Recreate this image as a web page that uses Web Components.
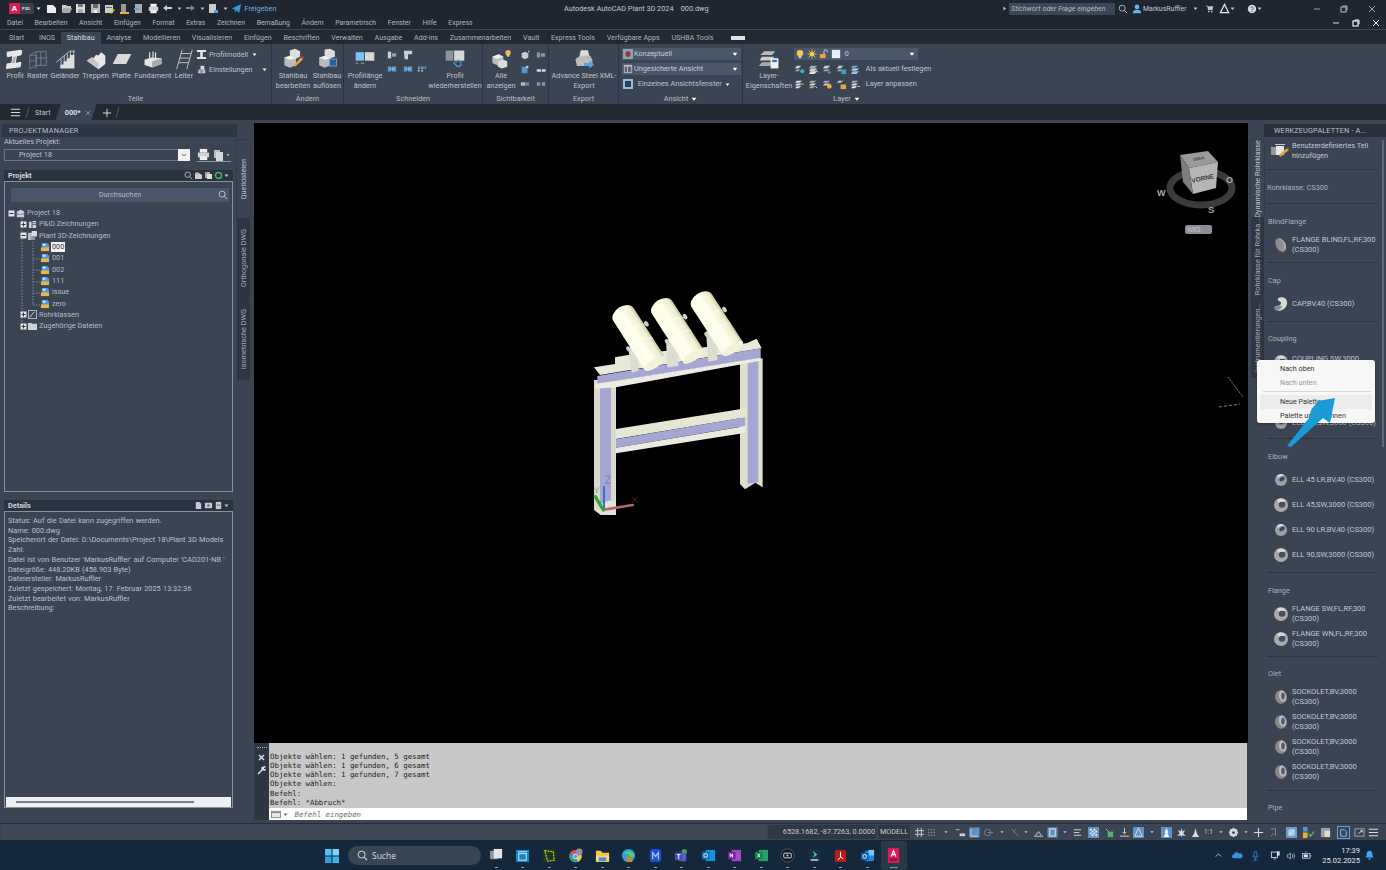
<!DOCTYPE html>
<html lang="de"><head><meta charset="utf-8"><title>AutoCAD Plant 3D</title>
<style>
html,body{margin:0;padding:0;width:1386px;height:870px;overflow:hidden;background:#222933;font:7.3px/10px Roboto,"Open Sans","Liberation Sans",sans-serif;color:#bcc3cc}
</style></head><body>
<script>
const I={
profil:[24,`<path fill="#e8e8e8" d="M3 4l15-2 2 1-1 5-5 1-1 7 5-1 1 1-1 5-15 2-1-1 1-5 5-1 1-7-5 1-1-1z"/><path fill="#aaa" d="M10 10l3-1-1 7-3 1z"/>`],
raster:[24,`<g fill="none" stroke="#858b95" stroke-width=".8"><path d="M3 8l7-4h11v15H10l-7 4zM3 8h7v15M10 4v15M15 4v15M3 14h7M10 11h11"/></g>`],
gelaender:[28,`<path fill="#ddd" d="M4 26h4v-5h4v-4h4v-4h4V9h6v17z"/><g fill="none" stroke="#ddd"><path d="M3 18L20 4h7M9 13v8M13 10v7M17 7v6M21 4v5M25 4v5"/></g>`],
treppen:[26,`<path fill="#e8e8e8" d="M2 15l6-4 2 1 3-4 3 1 3-4 5 4v10l-8 6z"/><path fill="#aaa" d="M2 15l14 9v-6L8 11z" opacity=".55"/>`],
platte:[26,`<path fill="#d9d9d9" d="M8 7h16l-6 12H2z"/>`],
fundament:[26,`<path fill="#e4e4e4" d="M3 14l9-3 11 1v7l-11 4-9-3z"/><path fill="#aaa" d="M12 16l11-4v7l-11 4z"/><path stroke="#e4e4e4" stroke-width="1.4" d="M9 12V5M13 11V4M16 12V5"/>`],
leiter:[24,`<g fill="none" stroke="#c8c8c8" stroke-width="1"><path d="M10 2L4 23M21 2l-6 21M8.500 6h11M7 11h11M6 16h11"/></g>`],
bedit:[28,`<path fill="#ddd" d="M10 3l7-2 6 3v7l-6 3-7-3z"/><path fill="#bbb" d="M3 12l8-2 7 3v9l-8 3-7-3z"/><path fill="#f2f2f2" d="M3 12l8-2 7 3-8 2z"/><path fill="#e9a33b" d="M17 24l-2-2 9-10 3 2z"/><path fill="#d33" d="M24 12l2-2 2 2-2 2z"/>`],
bdel:[28,`<path fill="#ddd" d="M11 2l7-1 6 3v7l-6 2-7-3z"/><path fill="#bbb" d="M4 12l8-2 7 3v9l-8 3-7-3z"/><path fill="#f2f2f2" d="M4 12l8-2 7 3-8 2z"/><rect x="17" y="14" width="9" height="9" fill="#2c5d9c" stroke="#6fb2ea"/>`],
plen:[26,`<rect x="2" y="5" width="10" height="10" fill="#7cc2f2"/><rect x="13" y="5" width="11" height="10" fill="#d8d8d8"/><path stroke="#ddd" stroke-width=".7" d="M2 18h3M8 18h4" />`],
prest:[26,`<rect x="2" y="3" width="9" height="12" fill="#8d949f"/><rect x="12" y="3" width="12" height="12" fill="#d8d8d8"/><path fill="none" stroke="#4fa3e6" stroke-width="1.400" d="M11 17l4 4a3 3 0 0 0 5-3 3 3 0 0 0-6-1"/>`],
alle:[28,`<path fill="#bbb" d="M3 11l8-3 6 3v8l-8 3-6-3z"/><path fill="#eee" d="M3 11l8-3 6 3-8 3z"/><path fill="#ddd" d="M10 17l7-2 5 2v7l-7 2-5-2z"/><circle cx="23" cy="6" r="3.400" fill="#f0b84c"/><rect x="21.500" y="9" width="3" height="2" fill="#ddd"/>`],
xml:[28,`<path fill="#ddd" d="M10 3h9l2 8H8z"/><path fill="#bbb" d="M3 14l6-4h13l3 6-1 7H5z"/><path fill="#4fa3e6" d="M14 19h7v-3l6 5-6 5v-3h-7z"/>`],
lay:[28,`<path fill="#bbb" d="M8 4h14l-4 5H3z"/><path fill="#ccc" d="M5 11h16l-4 5H2z"/><path fill="#aaa" d="M5 18h14l-4 5H1z"/><rect x="16" y="13" width="10" height="13" fill="#f1f1f1"/><rect x="18" y="15" width="6" height="3" fill="#2c75c9"/>`],
ibeam:[12,`<path fill="#e5e5e5" d="M1 1h10v2.400H7.400v5.200H11V11H1V8.600h3.600V3.400H1z"/>`],
gear:[12,`<path fill="#ccc" d="M3 6h7v4H2z"/><path fill="#ddd" d="M5 2h4v4H5z"/><circle cx="6" cy="8" r="2" fill="#999"/>`],
new1:[11,`<path fill="#eee" d="M1 2h6l3 3v5H1z"/>`],
open:[11,`<path fill="#ccc" d="M1 2h4l1 1h4v2H3L1 10z"/><path fill="#aaa" d="M3 5h8l-2 5H1z"/>`],
save:[11,`<path fill="#ddd" d="M1 1h9v9H1z"/><rect x="3" y="1" width="5" height="3" fill="#777"/><rect x="3" y="6" width="5" height="4" fill="#aaa"/>`],
saveas:[11,`<path fill="#bbb" d="M1 1h9v9H1z"/><rect x="3" y="1" width="5" height="4" fill="#666"/><rect x="4" y="7" width="3" height="3" fill="#eee"/>`],
qs3:[11,`<rect x="1" y="2" width="8" height="8" fill="#ccc"/><rect x="2" y="4" width="6" height="1" fill="#666"/><path fill="#e8a93c" d="M6 10l4-4 1 1-4 4z"/>`],
qs4:[11,`<rect x="2" y="1" width="5" height="8" fill="#999"/><path fill="#e8b23c" d="M1 9h9v2H1z"/>`],
qs5:[11,`<rect x="2" y="1" width="7" height="9" fill="#aaa"/><path fill="#4fa3e6" d="M1 5h5v2H1z"/>`],
print:[14,`<rect x="3" y="1" width="8" height="4" fill="#eee"/><rect x="1" y="5" width="12" height="5" fill="#cfd3d8"/><rect x="3" y="9" width="8" height="4" fill="#eee"/>`],
undo:[11,`<path fill="#ccc" d="M1 5l4-3v2h5v2H5v2z"/>`],
redo:[11,`<path fill="#7d8592" d="M10 5L6 2v2H1v2h5v2z"/>`],
share:[12,`<path fill="#2f97e0" d="M1 6l10-5-2 10-3-3-1 3-1-4z"/>`],
dots:[11,`<rect x="1" y="1" width="7" height="9" fill="#ccc"/><path fill="#4fa3e6" d="M6 7h4v3H6z"/>`],
tri:[5,`<path fill="#c4cad2" d="M.5 1.500h4L2.500 4z"/>`],
triw:[5,`<path fill="#fff" d="M.5 1.500h4L2.500 4z"/>`],
triR:[5,`<path fill="#c4cad2" d="M1.500.5v4L4 2.500z"/>`],
mag:[12,`<circle cx="5" cy="5" r="3.600" fill="none" stroke="#c5cbd3" stroke-width="1"/><path stroke="#c5cbd3" stroke-width="1.200" d="M7.800 7.800L11 11"/>`],
user:[12,`<circle cx="6" cy="3.500" r="2.800" fill="#67b3ee"/><path fill="#67b3ee" d="M1 11c0-3 2-4 5-4s5 1 5 4z"/>`],
cart:[12,`<path fill="#bcc3cc" d="M1 2h2l1 1h7l-1 5H4L3 3H1zM4 9h2v2H4zM8 9h2v2H8z"/>`],
tri3:[12,`<path fill="none" stroke="#e4e6ea" stroke-width="1.300" d="M6 1.500L10.500 10.500h-9z"/>`],
help:[12,`<circle cx="6" cy="6" r="5" fill="#d5d8dd"/><path fill="none" stroke="#59616e" stroke-width="1.200" d="M4.500 4.500a1.600 1.600 0 1 1 1.500 2.200v1"/><circle cx="6" cy="9.200" r=".7" fill="#59616e"/>`],
min:[10,`<path stroke="#9aa1ab" d="M2 5h6"/>`],
minw:[10,`<path stroke="#ddd" d="M2 5h6"/>`],
max:[10,`<rect x="2" y="3" width="5" height="5" fill="none" stroke="#bbb"/><path fill="none" stroke="#bbb" d="M4 3V2h4v4H7"/>`],
maxw:[10,`<rect x="2" y="3" width="5" height="5" fill="none" stroke="#eee" stroke-width="1.200"/><path fill="none" stroke="#eee" d="M4 3V2h4v4H7"/>`],
close:[10,`<path stroke="#9aa1ab" d="M2 2l6 6M8 2l-6 6"/>`],
closew:[10,`<path stroke="#eee" d="M2 2l6 6M8 2l-6 6"/>`],
ham:[12,`<path stroke="#d8dce2" stroke-width="1.100" d="M1 2.500h10M1 6h10M1 9.500h10"/>`],
plus:[12,`<path stroke="#e4e6ea" stroke-width="1.100" d="M6 1v10M1 6h10"/>`],
s1:[12,`<path fill="#cbd0d6" d="M1 2h4v8H1z"/><path fill="#9aa1ab" d="M6 4h5v4H6z"/>`],
s2:[12,`<path fill="#cbd0d6" d="M1 1h10v4H6v6H2z"/>`],
s4:[12,`<rect x="1" y="3" width="4" height="6" fill="#5a9ad6"/><rect x="6" y="3" width="5" height="6" fill="#5a9ad6"/><path stroke="#ddd" d="M4 6h4"/>`],
s5:[12,`<path fill="#5a9ad6" d="M1 3h3v3H1zM5 3h3v3H5zM9 3h2v3H9z"/><path fill="#ccc" d="M1 7h2v2H1zM5 7h2v2H5z"/>`],
v1:[12,`<path fill="#ccc" d="M2 4l4-2 4 2v5l-4 2-4-2z"/><path fill="#eee" d="M10 1h1v2h-1z"/>`],
v2:[12,`<path fill="#8b93a1" d="M1 3h4v6H1zM6 4h5v4H6z"/>`],
v3:[12,`<path fill="#4f97d5" d="M2 2h4l3 3v5H2z"/><path fill="#ccc" d="M7 1h3v3H7z"/>`],
v4:[12,`<path fill="#d9d9d9" d="M1 5h5v3H1zM7 5h4l1 1.500-1 1.500H7z"/>`],
v5:[12,`<path fill="#b7bcc4" d="M1 4h5v4H1z"/><path fill="#7b8390" d="M6 4h5v4H6z"/>`],
v6:[12,`<path fill="#8b93a1" d="M1 4h4v4H1zM7 4h4v4H7z"/>`],
bulb:[12,`<circle cx="6" cy="5" r="3.800" fill="#f4c84a"/><rect x="4.500" y="8.500" width="3" height="2.500" fill="#d9d9d9"/>`],
sun:[12,`<circle cx="6" cy="6" r="3" fill="#f4c84a"/><g stroke="#f4c84a"><path d="M6 .5v2M6 9.500v2M.5 6h2M9.500 6h2M2 2l1.500 1.500M8.500 8.500L10 10M10 2L8.500 3.500M3.500 8.500L2 10"/></g>`],
lock:[12,`<rect x="1" y="6" width="7" height="5" fill="#e8a93c"/><path fill="none" stroke="#ddd" stroke-width="1.100" d="M6 6V3a2 2 0 0 1 4 0v1"/>`],
swatch:[12,`<rect x="1" y="1" width="10" height="10" fill="#e6eef7"/>`],
la1:[12,`<path fill="#ccc" d="M3 2h5L5 5H1z"/><path fill="#aaa" d="M3 6h4L5 8H1z"/><circle cx="9" cy="8" r="2.200" fill="#38b6c9"/>`],
la2:[12,`<path fill="#aaa" d="M3 2h7L7 5H1z"/><path fill="#ccc" d="M3 5h7L7 8H1z"/><path fill="#e4e4e4" d="M3 8h7l-3 3H1z"/><path stroke="#ddd" d="M8 6l3 3"/>`],
la3:[12,`<path fill="#ccc" d="M3 2h6L6 5H1z"/><path fill="#aaa" d="M3 6h6L6 8H1z"/><path stroke="#4caf7c" d="M8 7v4M6 9h4"/>`],
la4:[12,`<path fill="#ccc" d="M3 2h5L5 5H1z"/><path fill="#3aa3c9" d="M6 6h5v5H6z"/><path fill="#aaa" d="M3 6h3v2H1z"/>`],
la5:[12,`<path fill="#6fb2ea" d="M3 2h6L6 4H1z"/><path fill="#ddd" d="M3 5h7L7 7H1z"/><path fill="#8fc1ea" d="M3 8h7l-3 3H1z"/>`],
lb1:[12,`<path fill="#ddd" d="M3 2h6L6 4H1zM3 5h6L6 7H1zM3 8h5L5 10H1z"/><path fill="#e8b23c" d="M8 5h3v1H8z"/>`],
lb2:[12,`<path fill="#aaa" d="M3 2h6L6 4H1z"/><path fill="#ddd" d="M3 5h6L6 7H1z"/><path fill="#aaa" d="M3 8h5L5 10H1z"/><path stroke="#e7e7e7" d="M8 8l2 2"/>`],
lb3:[12,`<path fill="#aaa" d="M3 2h6L6 4H1z"/><path fill="#ccc" d="M3 5h6L6 7H1z"/><circle cx="8" cy="8" r="2.500" fill="#e8b23c"/>`],
lb4:[12,`<path fill="#ccc" d="M3 2h5L5 4H1z"/><rect x="5" y="6" width="6" height="5" fill="#e8a93c"/>`],
lb5:[12,`<path fill="#aaa" d="M3 2h6L6 4H1z"/><path fill="#ddd" d="M3 5h6L6 7H1z"/><path fill="#eee" d="M3 8h5L5 10H1z"/><path stroke="#ccc" d="M8 8h3"/>`],
concept:[12,`<rect width="12" height="12" fill="#85a6b8"/><path fill="#a53333" d="M3 4l3-2 3 2v4l-3 2-3-2z"/>`],
unsaved:[12,`<rect x="1" y="1" width="10" height="10" fill="#bcc3cc"/><rect x="2" y="3" width="3" height="7" fill="#60656f"/><rect x="6" y="3" width="4" height="7" fill="#60656f"/>`],
single:[12,`<rect x="1" y="1" width="10" height="10" fill="#8bc0e8"/><path fill="#333c55" d="M3 3h6v6H3z"/>`],
cmdico:[11,`<rect x=".5" y="2.500" width="10" height="7" fill="#e8e8e8" stroke="#888"/><rect x="1" y="3" width="9" height="1.500" fill="#888"/>`],
docs:[12,`<rect x="2" y="1" width="6" height="8" fill="#b8bcc3"/><rect x="4" y="3" width="7" height="9" fill="#d5d8dd"/>`],
minus:[7,`<rect x=".5" y=".5" width="6" height="6" fill="#e6e6e6"/><path stroke="#333" d="M1.500 3.500h4"/>`],
pl:[7,`<rect x=".5" y=".5" width="6" height="6" fill="#e6e6e6"/><path stroke="#333" d="M1.500 3.500h4M3.500 1.500v4"/>`],
pr:[11,`<path fill="#cdd1d6" d="M1 3l5-2 4 2v7H1z"/><path fill="#8d949f" d="M1 5l4 1 5-1v2H1z"/>`],
draw:[10,`<path fill="#cfd3d8" d="M1 2h3v7H1zM5 1h4v8H5z"/><path stroke="#666" d="M5 3h4M5 5h4"/>`],
dwgs:[10,`<path fill="#b9bdc4" d="M0 2h6v8H0z"/><path fill="#d8dadf" d="M4 0h6v6H4z"/><path fill="#8d949f" d="M3 6h5v4H3z"/>`],
rk:[10,`<rect x=".5" y=".5" width="9" height="9" fill="#3b4453" stroke="#bcc3cc"/><path stroke="#ddd" d="M2 8l5-6"/>`],
files:[10,`<path fill="#cfd3d8" d="M0 1h4l1 1h5v7H0z"/>`],
dwg:[11,`<path fill="#4d99e3" d="M2 1h6l2 2v4H2z"/><path fill="#e6eef7" d="M3 2h3v2H3z"/><path fill="#e9b548" d="M1 6h9v4H1z"/>`],
search2:[11,`<circle cx="4.500" cy="4.500" r="3.300" fill="none" stroke="#c5cbd3"/><path stroke="#c5cbd3" d="M7 7l3 3"/>`],
pj1:[9,`<path fill="#ccc" d="M1 2h4l3 2v4H1z"/><circle cx="3" cy="2.500" r="1.500" fill="#caa"/>`],
pj2:[9,`<rect x="1" y="1" width="5" height="6" fill="#aaa"/><rect x="3" y="3" width="5" height="5" fill="#ddd"/>`],
pj3:[9,`<path fill="none" stroke="#4fb265" stroke-width="1.500" d="M1.500 5a3 3 0 0 1 6-1M7.500 4a3 3 0 0 1-6 1"/>`],
d1:[10,`<path fill="#c6cad0" d="M2 1h4l2 2v6H2z"/>`],
d2:[10,`<path fill="#c6cad0" d="M1 2h8v6H1z"/><circle cx="5" cy="5" r="1.500" fill="#6b7380"/>`],
d3:[10,`<path fill="#c6cad0" d="M2 1h6v8H2z"/><path fill="#59616e" d="M3 4h4v1H3z"/>`],
st1:[12,`<path stroke="#c9ced5" d="M4 1v10M8 1v10M1 4h10M1 8h10"/>`],
st2:[12,`<g fill="#8e96a2"><circle cx="3" cy="3" r=".8"/><circle cx="6" cy="3" r=".8"/><circle cx="9" cy="3" r=".8"/><circle cx="3" cy="6" r=".8"/><circle cx="6" cy="6" r=".8"/><circle cx="9" cy="6" r=".8"/><circle cx="3" cy="9" r=".8"/><circle cx="6" cy="9" r=".8"/><circle cx="9" cy="9" r=".8"/></g>`],
st3:[12,`<rect x="5" y="7" width="6" height="3" fill="#c9ced5"/><path stroke="#c9ced5" d="M1 3h4"/>`],
st4:[12,`<rect x=".5" y=".5" width="11" height="11" fill="#5e93c4"/><path fill="none" stroke="#c3d9ec" d="M2 2v8h8"/>`],
st5:[12,`<circle cx="5" cy="6" r="3.500" fill="none" stroke="#7b8390"/><path stroke="#7b8390" d="M5 6h6"/>`],
st6:[12,`<path stroke="#7b8390" d="M3 2l7 8"/><path stroke="#6e7a68" d="M8 2L5 6"/>`],
st7:[12,`<path stroke="#d4d8de" d="M1 10h10"/><path fill="none" stroke="#d4d8de" d="M3 9l3-4 3 4"/>`],
st8:[12,`<rect x=".5" y=".5" width="11" height="11" fill="#5e93c4"/><rect x="3" y="2" width="6" height="8" fill="none" stroke="#e2e9f1"/>`],
st9:[12,`<path stroke="#c9ced5" stroke-width="1.300" d="M2 3h8M2 6h6M2 9h8"/>`],
st10:[12,`<rect width="12" height="12" fill="#5e93c4"/><path fill="#e6edf3" d="M2 2h2v2H2zM6 2h2v2H6zM4 4h2v2H4zM8 4h2v2H8zM2 6h2v2H2zM6 6h2v2H6zM4 8h2v2H4zM8 8h2v2H8z"/>`],
st11:[12,`<path fill="#55b06e" d="M4 5h6v6H4z"/><path stroke="#bcc3cc" d="M2 2l3 3"/>`],
st12:[12,`<path stroke="#d4d8de" d="M1 10h10M6 1v7"/><path stroke="#e8b23c" d="M4 6h4"/>`],
st13:[12,`<rect width="12" height="12" fill="#5e93c4"/><path fill="none" stroke="#dbe6f0" d="M6 1l4 9H2z"/>`],
st14:[12,`<rect width="12" height="12" fill="#5e93c4"/><path fill="#fff" d="M6 1l2 5-1 1 2 4H3l2-4-1-1z"/>`],
st15:[12,`<path fill="#d8dce2" d="M6 1l1 4 3-2-2 4 3 3-4-1-1 2-1-2-4 1 3-3-2-4 3 2z"/>`],
st16:[12,`<path fill="#d8dce2" d="M6 1l1.500 6L10 11H2l2.500-4z"/>`],
st17:[12,`<path fill="#d8dce2" d="M5 1h2l.4 1.500 1.400-.6 1.400 1.400-.6 1.400L11 5v2l-1.400.4.6 1.400-1.400 1.400-1.400-.6L7 11H5l-.4-1.400-1.400.6-1.400-1.400.6-1.400L1 7V5l1.400-.4-.6-1.400 1.400-1.400 1.400.6z"/><circle cx="6" cy="6" r="1.500" fill="#3b4453"/>`],
st18:[12,`<path stroke="#d8dce2" stroke-width="1.200" d="M6 1v10M1 6h10"/>`],
st19:[12,`<path stroke="#8e96a2" d="M2 2h5v8M2 10l3-3" fill="none"/>`],
st20:[12,`<rect width="12" height="12" fill="#6b9ccb"/><circle cx="6" cy="6" r="4" fill="#a9c9e4"/><path stroke="#e9f0f6" d="M3 9l6-6"/>`],
st21:[14,`<path fill="#4f97d5" d="M1 1h5v5H1z"/><path fill="#e8b23c" d="M1 7h5v6H1z"/><path fill="#6cc36e" d="M7 7l2 3 4-5v2l-4 5-2-3z"/>`],
st22:[12,`<rect x="1" y="1" width="10" height="10" fill="#99a0a9"/><path fill="#e8d8c5" d="M5 4h6v7H5z"/>`],
st23:[14,`<rect x=".5" y=".5" width="13" height="13" fill="#33465e" stroke="#6ca6d9"/><path stroke="#8dbde8" d="M4 4h4l2 2v5H4z" fill="none"/>`],
st24:[12,`<rect x="1" y="2" width="10" height="8" fill="none" stroke="#a2a9b3"/><path stroke="#d8dce2" d="M5 7l4-3M7 4h2v2" fill="none"/>`],
};
const T={
win:`<g fill="#55c1f5"><rect x="1" y="1" width="6.500" height="6.500"/><rect x="8.500" y="1" width="6.500" height="6.500" fill="#7dd3f9"/><rect x="1" y="8.500" width="6.500" height="6.500" fill="#2b9fe6"/><rect x="8.500" y="8.500" width="6.500" height="6.500" fill="#3fb3ef"/></g>`,
tv:`<rect x="1" y="3" width="9" height="9" fill="#8b8f97"/><rect x="5" y="1" width="9" height="10" fill="#e5e5e5"/>`,
gx:`<rect x="1" y="2" width="14" height="13" fill="#1684c6"/><rect x="4" y="6" width="8" height="7" fill="none" stroke="#cfeeff"/><path stroke="#cfeeff" d="M3 4h10"/>`,
grn:`<rect x="1" y="1" width="14" height="14" fill="#26331f"/><path fill="none" stroke="#90d33c" stroke-dasharray="2 1" stroke-width="1.400" d="M3 3l9 1 1 9-7 1z"/>`,
chrome:`<circle cx="8" cy="9" r="6.500" fill="#3b82e6"/><path fill="#e74c3c" d="M2 6a6.500 6.500 0 0 1 12 0H8z"/><path fill="#f7c52d" d="M14 6a6.500 6.500 0 0 1-4 9l-1-5z"/><path fill="#3da758" d="M2 6a6.500 6.500 0 0 0 7 9L6 10z"/><circle cx="8" cy="9" r="2.500" fill="#4f9cf0" stroke="#fff" stroke-width=".8"/><circle cx="12" cy="4" r="3.500" fill="#8b95a2"/>`,
folder:`<path fill="#f3c34c" d="M1 3h5l2 2h7v10H1z"/><rect x="1" y="8" width="14" height="6" fill="#f9d873"/><rect x="4" y="10" width="8" height="4" fill="#3e90d8"/>`,
edge:`<circle cx="8" cy="8" r="7" fill="#2a9fd9"/><path fill="#4ed07e" d="M2 7c2-5 11-5 12 1 0 2-3 3-5 2 1-3-4-5-7-3z"/><rect x="6" y="9" width="6" height="6" fill="#c28b2c"/>`,
m:`<rect x="2" y="1" width="12" height="14" rx="3" fill="#1d4ed8"/><path fill="none" stroke="#a8c5ff" stroke-width="1.300" d="M5 12V5l3 4 3-4v7"/>`,
teams:`<circle cx="11" cy="4" r="3" fill="#35a853"/><rect x="5" y="5" width="8" height="9" rx="1" fill="#5b5fc7"/><rect x="1" y="5" width="8" height="8" fill="#464eb8"/><path stroke="#fff" d="M3 7h4M5 7v5"/>`,
ol:`<rect x="5" y="2" width="10" height="12" fill="#1490df"/><rect x="1" y="4" width="8" height="8" fill="#0f6cbd"/><circle cx="5" cy="8" r="2" fill="none" stroke="#fff"/>`,
one:`<rect x="5" y="2" width="10" height="12" fill="#9f4dc7"/><rect x="1" y="4" width="8" height="8" fill="#7719aa"/><path fill="none" stroke="#fff" d="M3.500 10V6L6 10V6"/>`,
xl:`<rect x="5" y="2" width="10" height="12" fill="#21a366"/><rect x="1" y="4" width="8" height="8" fill="#107c41"/><path stroke="#fff" d="M3.500 6l3 4M6.500 6l-3 4"/>`,
cam:`<circle cx="8" cy="8" r="7" fill="#101b29" stroke="#6d7785" stroke-width=".6"/><rect x="4" y="5.500" width="8" height="5" rx="1" fill="none" stroke="#dbe3ec"/><circle cx="8" cy="8" r="1" fill="#dbe3ec"/>`,
arrowb:`<rect x="2" y="1" width="12" height="14" rx="2" fill="#17313f"/><path fill="#49c5b9" d="M6 3l5 4-5 4 2-4z"/><rect x="4" y="12" width="8" height="1.500" fill="#dde"/>`,
pdf:`<rect x="2" y="2" width="12" height="13" rx="1" fill="#b71c1c"/><path fill="none" stroke="#fff" d="M8 4v6l-3 3M8 9l3 3"/>`,
ol2:`<rect x="5" y="3" width="10" height="11" rx="2" fill="#1e88e5"/><path fill="#7cc7f5" d="M9 2h6v6H9z"/><rect x="1" y="5" width="8" height="8" fill="#0d5aa7"/><circle cx="5" cy="9" r="2" fill="none" stroke="#fff"/>`,
acad:`<rect x="2" y="0" width="12" height="16" rx="1" fill="#e0195a"/><path fill="none" stroke="#fff" stroke-width="1.300" d="M5.500 9L8 3l2.500 6M6.300 7h3.400"/><rect x="4" y="11" width="8" height="3" fill="#8f1040"/>`,
chev:`<path fill="none" stroke="#e3e7ec" stroke-width="1.300" d="M3 10l5-5 5 5"/>`,
cloud:`<path fill="#2f97e0" d="M3 12a3 3 0 0 1 0-6 4 4 0 0 1 7-1 3.500 3.500 0 0 1 3 7z"/>`,
mic:`<rect x="6" y="2" width="4" height="8" rx="2" fill="none" stroke="#2f97e0" stroke-width="1.200"/><path fill="none" stroke="#2f97e0" d="M4 8c0 5 8 5 8 0M8 12v3M5 15h6"/>`,
net:`<rect x="2" y="3" width="9" height="8" fill="none" stroke="#e3e7ec" stroke-width="1.200"/><rect x="10" y="2" width="4" height="6" fill="#e3e7ec"/><path stroke="#e3e7ec" d="M5 13h4"/>`,
vol:`<path fill="none" stroke="#e3e7ec" d="M2 6h2l3-3v10l-3-3H2zM10 5c1 2 1 4 0 6M12 4c2 2 2 6 0 8"/>`,
bat:`<rect x="2" y="5" width="11" height="7" fill="none" stroke="#e3e7ec"/><rect x="4" y="6.500" width="6" height="4" fill="#e3e7ec"/><path stroke="#e3e7ec" d="M14 7v3M6 3l2-1"/>`,
bell:`<path fill="#3aa9f0" d="M8 1a4 4 0 0 1 4 4c0 4 2 6 2 6H2s2-2 2-6a4 4 0 0 1 4-4zM6 12h4a2 2 0 0 1-4 0z"/>`,
};
function svg(n,w,h){const v=I[n];h=h||w;return `<svg xmlns="http://www.w3.org/2000/svg" width="${w}" height="${h}" viewBox="0 0 ${v[0]} ${v[0]}" style="display:block;flex:none">${v[1]}</svg>`}
function tsvg(n,s){return `<svg xmlns="http://www.w3.org/2000/svg" width="${s}" height="${s}" viewBox="0 0 16 16" style="display:block;flex:none">${T[n]}</svg>`}
function def(tag,html,fn){customElements.define(tag,class extends HTMLElement{constructor(){super();const r=this.attachShadow({mode:'open'});r.innerHTML=typeof html==='function'?html(this):html;}connectedCallback(){if(fn&&!this._d){this._d=1;fn(this,this.shadowRoot)}}})}
const a=(e,n,d)=>e.getAttribute(n)??d;

/* ---- title + menu ---- */
def('x-titlebar',`<style>
:host{display:flex;align-items:center;height:17px;background:#1f2630;padding-left:9px;box-sizing:border-box;color:#c3c9d1;position:relative;font-size:7.300px}
.logo{display:flex;width:25px;height:11px;background:#3a3f4b;border-radius:1px;overflow:hidden}
.logo b{width:11px;background:#d81b5b;color:#fff;font:bold 8px/11px "Liberation Sans",sans-serif;text-align:center}
.logo i{font:bold 4px/11px "Liberation Sans",sans-serif;color:#eee;padding-left:2px}
.q{display:flex;align-items:center;gap:3.500px;margin-left:5px}
.share{color:#6eb0e4;margin-left:-1px}
.title{position:absolute;left:564px;color:#c3c9d1}
.right{margin-left:auto;display:flex;align-items:center}
.search{width:106px;height:12px;background:#3b4659;font-style:italic;color:#b6bcc6;padding-left:2px;box-sizing:border-box;line-height:12px;font-size:7.200px;margin-left:2px}
.nm{width:44px;margin:0 6px 0 1px;white-space:nowrap;font-size:7px}
</style>
<div class="logo"><b>A</b><i>P3D</i></div><span id="tr" style="margin-left:2px"></span>
<div class="q" id="q"></div>
<span class="title">Autodesk AutoCAD Plant 3D 2024&nbsp;&nbsp;&nbsp;&nbsp;000.dwg</span>
<div class="right" id="r"></div>`,(e,r)=>{
 r.getElementById('tr').innerHTML=svg('triw',5);
 r.getElementById('q').innerHTML=['new1','open','save','saveas','qs3','qs4','qs5','print'].map(n=>svg(n,11)).join('')+svg('undo',11)+svg('tri',5)+svg('redo',11)+svg('tri',5)+svg('dots',11)+svg('tri',5)+svg('share',11)+'<span class="share">Freigeben</span>';
 r.getElementById('r').innerHTML=svg('triR',5)+'<div class="search">Stichwort oder Frage eingeben</div><span style="width:3px"></span>'+svg('mag',10)+'<span style="width:4px"></span>'+svg('user',10)+'<span class="nm">MarkusRuffler</span>'+svg('tri',5)+'<span style="width:7px"></span>'+svg('cart',9)+'<span style="width:5px"></span>'+svg('tri3',11)+svg('tri',5)+'<span style="width:12px"></span>'+svg('help',10)+svg('tri',5)+'<span style="width:50px"></span>'+svg('min',10)+'<span style="width:17px"></span>'+svg('max',10)+'<span style="width:18px"></span>'+svg('close',10)+'<span style="width:9px"></span>';
});
def('x-menubar',`<style>:host{display:flex;align-items:center;height:12px;padding-left:7px;background:#1f2630;color:#aeb5bf;font-size:6.900px}
span{margin-right:11.650px}.w{margin-left:auto;display:flex;gap:10px;margin-right:5px;align-items:center}</style>
<span>Datei</span><span>Bearbeiten</span><span>Ansicht</span><span>Einfügen</span><span>Format</span><span>Extras</span><span>Zeichnen</span><span>Bemaßung</span><span>Ändern</span><span>Parametrisch</span><span>Fenster</span><span>Hilfe</span><span>Express</span><div class="w" id="w"></div>`,(e,r)=>{r.getElementById('w').innerHTML=svg('minw',10)+svg('maxw',10)+svg('closew',10)});
def('x-ribbontabs',`<style>:host{display:flex;align-items:flex-end;height:15px;border-top:1px solid #3d4655;background:#222933;padding-left:3px;box-sizing:border-box;color:#aeb5bf;font-size:7.100px}
span{padding:0 5.900px;line-height:12px;height:12px}.on{background:#3b4453;color:#d4d8de}
.k{width:14px;height:4px;background:#dfe2e6;margin:0 2px 4px 12px}</style>
<span style="margin-right:3px">Start</span><span>INOS</span><span class="on">Stahlbau</span><span>Analyse</span><span>Modellieren</span><span>Visualisieren</span><span>Einfügen</span><span>Beschriften</span><span>Verwalten</span><span>Ausgabe</span><span>Add-ins</span><span>Zusammenarbeiten</span><span>Vault</span><span>Express Tools</span><span>Verfügbare Apps</span><span>USHBA Tools</span><div class="k"></div>`);

/* ---- ribbon ---- */
def('x-ribbon',`<style>:host{display:flex;height:60px;background:#3b4453}</style><slot></slot>`);
def('x-panel',e=>`<style>:host{display:grid;grid-template-rows:50px 10px;flex:none;box-sizing:border-box;border-right:1px solid #2d3440}
.c{display:flex;min-width:0}.t{text-align:center;line-height:10px;color:#b5bcc6;display:flex;justify-content:center;align-items:center;gap:3px}</style>
<div class="c"><slot></slot></div><div class="t" id="t"></div>`,(e,r)=>{e.style.width=a(e,'w')+'px';const t=r.getElementById('t');t.textContent=a(e,'title');e.removeAttribute('title');if(e.hasAttribute('arrow'))t.insertAdjacentHTML('beforeend',svg('triw',6));});
def('x-big',e=>`<style>:host{display:flex;flex-direction:column;align-items:center;flex:none;padding-top:4px;box-sizing:border-box;text-align:center;line-height:10px;color:#bcc3cc;white-space:nowrap}
#i{height:25px;display:flex;align-items:center;margin-top:-2px}</style><div id="i"></div><div><slot></slot></div>`,(e,r)=>{e.style.width=a(e,'w')+'px';r.getElementById('i').innerHTML=svg(a(e,'i'),+a(e,'s',22));});
def('x-smallgrid',`<style>:host{display:grid;flex:none;align-content:start}</style><slot></slot>`,e=>{e.style.cssText+=`grid-template-columns:${a(e,'cols')};grid-auto-rows:${a(e,'rh','14.5px')};padding-top:${a(e,'pt','5px')};width:${a(e,'w')}px`});
def('x-combo',e=>`<style>:host{display:flex;align-items:center;height:12px;background:#4a566a;box-sizing:border-box;padding:0 3px 0 1px;gap:1px;color:#c9ced5;flex:none}
#a{margin-left:auto}</style><span id="i" style="display:contents"></span><slot></slot><span id="a"></span>`,(e,r)=>{r.getElementById('i').innerHTML=(a(e,'i','').split(' ').filter(Boolean)).map(n=>svg(n,10)).join(' ');r.getElementById('a').innerHTML=svg('triw',6)});
def('x-srow',e=>`<style>:host{display:flex;align-items:center;gap:2px;line-height:10px;color:#bcc3cc;white-space:nowrap}</style><span id="i" style="display:contents"></span><slot></slot>`,(e,r)=>{r.getElementById('i').innerHTML=(a(e,'i','').split(' ').filter(Boolean)).map(n=>svg(n,+a(e,'s',11))).join('')});
def('x-ic',`<style>:host{display:flex;align-items:center;justify-content:center}</style><span id="o"></span>`,(e,r)=>{r.getElementById('o').innerHTML=svg(a(e,'n'),+a(e,'s',10))});

/* ---- file tabs ---- */
def('x-filetabs',`<style>:host{display:flex;align-items:center;height:16px;background:#222933;padding:1px 0 0 10px;box-sizing:border-box;color:#bfc5cd}
.sl{width:1px;height:11px;background:#4f5866;transform:rotate(15deg);margin:0 11px}
.on{display:flex;align-items:center;gap:3px;height:16px;margin-top:-1px;padding:1px 5px 0 9px;box-sizing:border-box;background:#3b4453;margin-left:5px;color:#e2e5ea;font-weight:600;clip-path:polygon(5px 0,100% 0,calc(100% - 5px) 100%,0 100%)}
</style><span id="h"></span><div class="sl" style="margin:0 7px 0 6px"></div><span>Start</span>
<div class="on"><span>000*</span><span id="x"></span></div><span id="p" style="margin-left:5px"></span><div class="sl" style="margin:0 0 0 5px"></div>`,(e,r)=>{r.getElementById('h').innerHTML=svg('ham',11);r.getElementById('x').innerHTML=svg('close',8);r.getElementById('p').innerHTML=svg('plus',10)});

/* ---- workspace ---- */
def('x-workspace',`<style>:host{display:grid;grid-template-columns:254px 994px 138px;height:700px;background:#2f3744}</style><slot></slot>`);
def('x-vtab',e=>`<style>:host{display:flex;justify-content:center;align-items:center;writing-mode:vertical-rl;box-sizing:border-box;overflow:hidden;white-space:nowrap;width:13px;background:#2e3543;color:#a4abb6;border-radius:0 2px 2px 0;flex:none}
:host([on]){background:#3b4453;color:#bcc3cc;outline:1px solid #333b48}
span{transform:rotate(180deg)}</style><span><slot></slot></span>`,e=>{e.style.height=a(e,'h')+'px'});
def('x-section-head',e=>`<style>:host{display:flex;align-items:center;height:11px;background:#2c3340;padding-left:4px;font-weight:700;color:#d1d5db;box-sizing:border-box;width:229px}
#i{margin-left:auto;display:flex;gap:1px;align-items:center;margin-right:4px}</style><slot></slot><div id="i"></div>`,(e,r)=>{r.getElementById('i').innerHTML=a(e,'i').split(' ').map(n=>n==='tri'?svg(n,5):svg(n,9)).join('')});
def('x-tree-row',e=>`<style>:host{display:flex;align-items:center;height:11.3px;white-space:nowrap;color:#b4bbc5}
#t{width:7px;margin-right:1px;flex:none}#i{margin-right:2px}
:host([sel]) span.l{background:#f3f3f3;color:#333;padding:0 1px;margin-left:-1px}</style><div id="t"></div><div id="i"></div><span class="l"><slot></slot></span>`,(e,r)=>{const l=+a(e,'lv',0);e.style.paddingLeft=[3,15,27][l]+'px';const tg=a(e,'tg','');r.getElementById('t').innerHTML=tg?svg(tg,7):'';const n=a(e,'ic');r.getElementById('i').innerHTML=svg(n,n==='dwg'?10:9)});
def('x-project',`<style>:host{display:grid;grid-template-columns:237px 13px;background:#3b4453;position:relative}
.m{display:flex;flex-direction:column;padding-left:4px;padding-top:1px}
.h{height:13px;background:#2e3543;margin-left:-2px;padding-left:7px;line-height:13px;color:#b9c0ca;letter-spacing:.25px}
.lb{height:12px;line-height:9px}
.cr{display:flex;height:12px;align-items:center;width:227px}
.cb{width:186px;height:12px;border:1px solid #6c7686;border-right:0;box-sizing:border-box;padding-left:14px;line-height:10px;display:flex;align-items:center;justify-content:space-between}
.cb b{width:12px;height:12px;background:#f1f1f1;display:flex;align-items:center;justify-content:center}
.ic{display:flex;gap:2px;margin-left:7px;align-items:center;border-bottom:1px solid #9098a4;height:12px;width:34px}
.box{border:1px solid #8791a0;width:229px;box-sizing:border-box;padding:6px 3px}
.srch{height:14px;background:#4b566a;margin:0 0 5.500px 3px;width:218px;display:flex;align-items:center;justify-content:center;position:relative;color:#b2b9c3}
.srch span{position:absolute;right:1px;top:2px}
.tree{position:relative;margin:0 -3px}
.tree svg.l{position:absolute;left:0;top:0;z-index:0}
x-tree-row{position:relative}
.d{line-height:9.700px;padding:4px 0 0 2px;white-space:nowrap;overflow:hidden;height:285px;box-sizing:border-box;color:#b9c0ca;font-size:7.350px;word-spacing:.5px}
.sb{height:10px;background:#eef0f3;display:flex;align-items:center;padding-left:10px;width:225px;box-sizing:border-box}
.sb i{display:block;width:178px;height:2px;background:#7a7f88}
.tabs{padding-top:17px;display:flex;flex-direction:column}
</style>
<div class="m"><div class="h">PROJEKTMANAGER</div><div class="lb">Aktuelles Projekt:</div>
<div class="cr"><div class="cb">Project 18<b id="cbb"></b></div><div class="ic" id="ci"></div></div>
<div style="height:9px"></div>
<x-section-head i="search2 pj1 pj2 pj3 tri">Projekt</x-section-head>
<div class="box" style="height:311px"><div class="srch">Durchsuchen<span id="sm"></span></div>
<div class="tree"><svg class="l" width="60" height="130" viewBox="0 0 60 130"><g stroke="#a4abb6" stroke-width=".7" stroke-dasharray="1.500 1.500" fill="none"><path d="M17 10V120M28 34V97M28 51H35M28 62H35M28 74H35M28 85H35M28 97H35M17 17h4M17 107h4"/></g></svg>
<x-tree-row lv="0" tg="minus" ic="pr">Project 18</x-tree-row>
<x-tree-row lv="1" tg="pl" ic="draw">P&amp;ID Zeichnungen</x-tree-row>
<x-tree-row lv="1" tg="minus" ic="dwgs">Plant 3D-Zeichnungen</x-tree-row>
<x-tree-row lv="2" ic="dwg" sel>000</x-tree-row>
<x-tree-row lv="2" ic="dwg">001</x-tree-row>
<x-tree-row lv="2" ic="dwg">002</x-tree-row>
<x-tree-row lv="2" ic="dwg">111</x-tree-row>
<x-tree-row lv="2" ic="dwg">issue</x-tree-row>
<x-tree-row lv="2" ic="dwg">zero</x-tree-row>
<x-tree-row lv="1" tg="pl" ic="rk">Rohrklassen</x-tree-row>
<x-tree-row lv="1" tg="pl" ic="files">Zugehörige Dateien</x-tree-row>
</div></div>
<div style="height:8px"></div>
<x-section-head i="d1 d2 d3 tri">Details</x-section-head>
<div class="box" style="height:297px;padding:0 1px"><div class="d">Status: Auf die Datei kann zugegriffen werden.<br>Name: 000.dwg<br>Speicherort der Datei: D:\\Documents\\Project 18\\Plant 3D Models<br>Zahl:<br>Datei ist von Benutzer 'MarkusRuffler' auf Computer 'CAD201-NB '<br>Dateigröße: 448.20KB (458.903 Byte)<br>Dateiersteller: MarkusRuffler<br>Zuletzt gespeichert: Montag, 17. Februar 2025 13:32:36<br>Zuletzt bearbeitet von: MarkusRuffler<br>Beschreibung:</div><div class="sb"><i></i></div></div>
</div>
<div class="tabs"><x-vtab on h="78">Quelldateien</x-vtab><x-vtab h="80">Orthogonale DWG</x-vtab><x-vtab h="82">Isometrische DWG</x-vtab></div>`,(e,r)=>{
 r.getElementById('ci').innerHTML=svg('print',13)+svg('docs',12)+svg('tri',4);
 r.getElementById('sm').innerHTML=svg('search2',10);
 r.getElementById('cbb').innerHTML='<svg width="6" height="6" viewBox="0 0 6 6"><path fill="none" stroke="#666" d="M1 2l2 2 2-2"/></svg>';
});

/* ---- viewport ---- */
function pipe(x1,y1,x2,y2){const dx=x2-x1,dy=y2-y1,L=Math.hypot(dx,dy),an=Math.atan2(dy,dx)*180/Math.PI;
 const band=t=>`<path d="M${t} -36A12 36 0 0 0 ${t} 36" fill="none" stroke="#fff" stroke-width="1.800"/>`;
 return `<g transform="translate(${x1} ${y1}) rotate(${an})"><ellipse cx="${L*.35}" cy="-43" rx="9" ry="6" fill="#cfcfcf"/><ellipse cx="${L*.55}" cy="43" rx="9" ry="6" fill="#cfcfcf"/><path d="M0 -36A24 36 0 0 0 0 36L${L} 36A13 36 0 0 0 ${L} -36Z" fill="url(#pg)"/><ellipse cx="${L}" rx="13" ry="36" fill="#f2f2da"/>${band(L*.35)}${band(L*.62)}</g>`}
def('x-viewport',`<style>:host{display:flex;flex-direction:column;min-width:0}
.cv{height:620px;background:#000;position:relative;overflow:hidden}
svg.s{position:absolute;left:0;top:0}
</style><div class="cv" id="cv"></div><x-command></x-command>`,(e,r)=>{
 r.getElementById('cv').innerHTML=`<svg class="s" xmlns="http://www.w3.org/2000/svg" width="994" height="620" viewBox="254 123 994 620">
<defs><linearGradient id="pg" gradientUnits="userSpaceOnUse" x1="0" y1="-36" x2="0" y2="36"><stop offset="0" stop-color="#c8c8a8"/><stop offset=".14" stop-color="#eeeed0"/><stop offset=".5" stop-color="#ffffee"/><stop offset="1" stop-color="#fbfbe8"/></linearGradient></defs>
<g transform="translate(580 280) scale(.33333)">
<polygon points="42,300 108,300 108,705 62,705 42,690" fill="#e2e2d6"/><polygon points="60,325 93,320 93,660 60,672" fill="#a6a6d2"/><polygon points="42,300 60,300 60,690 42,690" fill="#dadad0"/><polygon points="93,320 106,320 106,660 93,668" fill="#d8d8d0"/><polygon points="480,245 548,235 548,622 526,608 495,628 480,612" fill="#dedecf"/><polygon points="503,245 535,240 535,606 503,612" fill="#a6a6d2"/>
<polygon points="42,262 105,252 105,232 160,222 500,190 530,176 545,205 60,285" fill="#e9e9db"/>
<polygon points="52,288 542,205 542,235 52,312" fill="#a6a6d2"/>
<polygon points="46,312 542,233 542,242 108,322 46,326" fill="#ecece4"/>
<polygon points="108,447 498,385 498,412 108,477" fill="#e6e6d5"/><polygon points="108,478 495,412 495,438 108,503" fill="#a6a6d2"/><polygon points="108,503 498,438 498,458 108,520" fill="#eaeae2"/>
<polygon points="145,205 175,190 175,272 155,278" fill="#dcdcd0"/><polygon points="258,180 295,170 295,258 262,262" fill="#dcdcd0"/><polygon points="378,155 412,145 412,240 385,245" fill="#dcdcd0"/>
${pipe(130,103,224,250)}${pipe(246,82,340,228)}${pipe(365,62,458,205)}
<g stroke-linecap="round"><line x1="72" y1="690" x2="72" y2="620" stroke="#3a6fd0" stroke-width="6"/><line x1="46" y1="650" x2="70" y2="690" stroke="#3aa33a" stroke-width="10"/><line x1="78" y1="688" x2="158" y2="675" stroke="#b06a6a" stroke-width="8"/></g>
<path d="M76 588h15l-14 22h15" fill="none" stroke="#3a6fd0" stroke-width="1.800"/><path d="M156 650l16 18M172 650l-16 18" stroke="#9b2c2c" stroke-width="1.800"/><path d="M42 622l8 10 8-10M50 632v8" fill="none" stroke="#2f7d2f" stroke-width="1.500"/>
</g>
<ellipse cx="1201" cy="188" rx="31" ry="17" fill="none" stroke="#3c3c3c" stroke-width="7"/>
<polygon points="1180,155 1208,151 1218,162 1189,168" fill="#9a9a9a"/><polygon points="1189,168 1218,162 1216,188 1193,194" fill="#b5b5b5"/><polygon points="1180,155 1189,168 1193,194 1183,182" fill="#7d7d7d"/>
<text x="1193" y="161" font-size="4" font-family="Liberation Sans" font-weight="700" fill="#444" transform="rotate(-10 1193 161)">OBEN</text>
<text x="1192" y="183" font-size="6.500" font-family="Liberation Sans" font-weight="700" fill="#3e3e3e" transform="rotate(-12 1192 183)">VORNE</text>
<text x="1157" y="196" font-size="9" font-family="Liberation Sans" font-weight="700" fill="#aaa">W</text><text x="1226" y="183" font-size="9" font-family="Liberation Sans" font-weight="700" fill="#aaa">O</text><text x="1208" y="213" font-size="9.500" font-family="Liberation Sans" font-weight="700" fill="#aaa">S</text>
<rect x="1185" y="225" width="27" height="9" rx="2" fill="#8d8d99"/><text x="1187" y="232" font-size="6.500" font-family="Open Sans" fill="#c8c8d2">WKS</text>
<path d="M1228 377l15 20" stroke="#d9d9c9" stroke-width=".6" stroke-dasharray="2 1" fill="none"/><path d="M1219 407l21-3" stroke="#d9d9c9" stroke-width=".6" stroke-dasharray="3 2" fill="none"/>
</svg>`;
});
def('x-command',`<style>:host{display:grid;grid-template-columns:15px 1fr;height:80px;background:#3b4453;box-sizing:border-box}
.g{background:#2e3543;height:77px;display:flex;flex-direction:column;align-items:center;color:#d5d8dd}
.dots{width:10px;height:1px;margin-top:4px;border-top:1px dotted #aab0ba}
.m{display:flex;flex-direction:column;height:77px;margin-right:1px}
.log{background:#c8c8c8;height:65px;box-sizing:border-box;padding:8.500px 0 0 1px;font:7.380px/9.300px "DejaVu Sans Mono","Liberation Mono",monospace;color:#1d1d1d;white-space:pre;overflow:hidden}
.in{height:12px;background:#fff;display:flex;align-items:center;gap:2px;padding-left:2px;font:italic 7.380px "DejaVu Sans Mono","Liberation Mono",monospace;color:#6d6d6d}
</style><div class="g"><div class="dots"></div><span id="x" style="margin-top:5px"></span><span id="wr" style="margin-top:5px"></span></div>
<div class="m"><div class="log">Objekte wählen: 1 gefunden, 5 gesamt
Objekte wählen: 1 gefunden, 6 gesamt
Objekte wählen: 1 gefunden, 7 gesamt
Objekte wählen:
Befehl:
Befehl: *Abbruch*</div><div class="in"><span id="c"></span><span id="t"></span>&nbsp;Befehl eingeben</div></div>`,(e,r)=>{
 r.getElementById('x').innerHTML='<svg width="7" height="7" viewBox="0 0 7 7" style="display:block"><path stroke="#e4e6ea" stroke-width="1.400" d="M1 1l5 5M6 1L1 6"/></svg>';
 r.getElementById('wr').innerHTML='<svg width="9" height="9" viewBox="0 0 9 9" style="display:block"><path stroke="#dfe2e6" stroke-width="1.500" d="M1 8l5-5"/><path fill="#dfe2e6" d="M5 1l3-1 1 1-2 1v1l2 0-1 2-3-1-1-2z"/></svg>';
 r.getElementById('c').innerHTML=svg('cmdico',10);r.getElementById('t').innerHTML='<svg width="5" height="5" viewBox="0 0 5 5" style="display:block"><path fill="#666" d="M.5 1.500h4L2.500 4z"/></svg>';
});

/* ---- palette ---- */
const disc={
 flat:`<ellipse cx="8" cy="8" rx="4.500" ry="7" transform="rotate(-25 8 8)" fill="#b9b9b9"/><ellipse cx="7" cy="8" rx="4" ry="7" transform="rotate(-25 7 8)" fill="#8e8e8e"/>`,
 cap:`<path fill="#d8d8d8" d="M5 2c5-2 10 0 9 6s-8 8-11 6c-2-2-2-3 0-4 3 0 5-1 5-3S4 6 5 2z"/><path fill="#8a8a8a" d="M3 10c3 0 5-1 6 1-1 2-5 4-7 3-1-1 0-3 1-4z"/>`,
 ring:`<circle cx="8" cy="8" r="7" fill="#a9a9a9"/><circle cx="9" cy="7.500" r="3.300" fill="#45505f"/><path fill="#d9d9d9" d="M4 3a6.500 6.500 0 0 1 9 1l-3 1a4 4 0 0 0-4 1z"/>`,
 elbow:`<circle cx="8" cy="8" r="6" fill="#a0a0a0"/><ellipse cx="9" cy="7" rx="3" ry="2" fill="#3f4a58" transform="rotate(-30 9 7)"/><path fill="#ddd" d="M4 4a5 5 0 0 1 7-1l-2 1a4 4 0 0 0-4 2z"/>`,
 olet:`<ellipse cx="8" cy="8" rx="6" ry="6.800" transform="rotate(-10 8 8)" fill="#8a8a8a"/><ellipse cx="9.500" cy="7" rx="3.500" ry="5.500" transform="rotate(-10 9.500 7)" fill="#bcbcbc"/><ellipse cx="10" cy="7" rx="1.800" ry="3.500" fill="#515b69"/>`};
def('x-pal-item',e=>`<style>:host{display:flex;align-items:center;min-height:20px;padding-left:6px;line-height:10px;color:#c2c8d0;margin-bottom:5px;font-size:7.500px;white-space:nowrap}
#i{width:16px;height:16px;margin-right:3px;flex:none}</style><div id="i"></div><div><slot></slot></div>`,(e,r)=>{r.getElementById('i').innerHTML=`<svg width="16" height="16" viewBox="0 0 16 16" style="display:block">${disc[a(e,'t','ring')]}</svg>`});
def('x-pal-sec',e=>`<style>:host{display:block;border-bottom:1px solid #2e3542;box-sizing:border-box;overflow:hidden}
.t{line-height:10px;margin:0 0 8px 1px;color:#aab0b8}</style><div class="t" id="t"></div><slot></slot>`,(e,r)=>{r.getElementById('t').textContent=a(e,'label');e.removeAttribute('label');e.style.height=a(e,'h')+'px';e.style.paddingTop=a(e,'pt','13')+'px'});
def('x-palette',`<style>:host{display:grid;grid-template-columns:3px 13px 1fr;grid-template-rows:14px 1fr;background:#3b4453;position:relative;overflow:hidden;height:700px}
.h{grid-column:3;height:13px;margin-top:1px;background:#2a313d;padding-left:10px;line-height:13px;color:#bcc3cc;letter-spacing:.15px}
.t{grid-column:2;grid-row:2;display:flex;flex-direction:column;padding-top:3px}
.l{grid-column:3;grid-row:2;padding:1px 8px 0 3px;position:relative;height:686px;overflow:hidden}
.top{display:flex;height:32px;box-sizing:border-box;align-items:center;border-bottom:1px solid #2e3542;line-height:10px;color:#c2c8d0;padding:0 0 6px 4px;gap:3px;white-space:nowrap}
.sb{position:absolute;right:2px;top:3px;width:2px;height:307px;background:#5f6877}
.rk{height:34px;box-sizing:border-box;line-height:36px;border-bottom:1px solid #2e3542;color:#aab1bb}
</style><div class="h">WERKZEUGPALETTEN - A...</div>
<div class="t"><x-vtab on h="77">Dynamische Rohrklasse</x-vtab><x-vtab h="80">Rohrklasse für Rohrka...</x-vtab><x-vtab h="81">Instrumentierungen...</x-vtab></div>
<div class="l">
<div class="top"><span id="add"></span><div>Benutzerdefiniertes Teil<br>hinzufügen</div></div>
<div class="rk">Rohrklasse: CS300</div>
<x-pal-sec label="BlindFlange" h="59"><x-pal-item t="flat">FLANGE BLIND,FL,RF,300<br>(CS300)</x-pal-item></x-pal-sec>
<x-pal-sec label="Cap" h="59"><x-pal-item t="cap">CAP,BV,40 (CS300)</x-pal-item></x-pal-sec>
<x-pal-sec label="Coupling" h="117" pt="12"><x-pal-item t="ring" style="align-items:flex-start;padding-top:2px;box-sizing:border-box">COUPLING SW,3000</x-pal-item><div style="height:36px"></div><x-pal-item t="elbow">ELBOW,SW,3000 (CS300)</x-pal-item></x-pal-sec>
<x-pal-sec label="Elbow" h="134"><x-pal-item t="elbow">ELL 45 LR,BV,40 (CS300)</x-pal-item><x-pal-item t="ring">ELL 45,SW,3000 (CS300)</x-pal-item><x-pal-item t="elbow">ELL 90 LR,BV,40 (CS300)</x-pal-item><x-pal-item t="ring">ELL 90,SW,3000 (CS300)</x-pal-item></x-pal-sec>
<x-pal-sec label="Flange" h="84"><x-pal-item t="ring">FLANGE SW,FL,RF,300<br>(CS300)</x-pal-item><x-pal-item t="ring">FLANGE WN,FL,RF,300<br>(CS300)</x-pal-item></x-pal-sec>
<x-pal-sec label="Olet" h="134" pt="12"><x-pal-item t="olet">SOCKOLET,BV,3000<br>(CS300)</x-pal-item><x-pal-item t="olet">SOCKOLET,BV,3000<br>(CS300)</x-pal-item><x-pal-item t="olet">SOCKOLET,BV,3000<br>(CS300)</x-pal-item><x-pal-item t="olet">SOCKOLET,BV,3000<br>(CS300)</x-pal-item></x-pal-sec>
<x-pal-sec label="Pipe" h="40" pt="12" style="border:0"></x-pal-sec>
<div class="sb"></div>
</div><slot></slot>`,(e,r)=>{r.getElementById('add').innerHTML='<svg width="18" height="14" viewBox="0 0 18 14" style="display:block"><rect x="0" y="3" width="5" height="8" fill="#999"/><rect x="5" y="2" width="8" height="9" fill="#e6e6e6"/><rect x="4" y="0" width="10" height="1" fill="#ccc"/><path fill="#e9a33b" d="M9 13l-1-2 8-7 2 2z"/><path fill="#d33" d="M16 4l1-1 1 2-1 1z"/></svg>'});
def('x-contextmenu',`<style>:host{position:absolute;left:9px;top:237px;width:118px;height:63px;background:#f7f7f7;border-radius:3px;box-shadow:0 1px 3px rgba(0,0,0,.3);color:#333;font-size:7.200px;line-height:14px;box-sizing:border-box;padding:2px 3px;z-index:2}
div{padding-left:20px;height:14px}.off{color:#9a9a9a}.hr{height:0;border-top:1px solid #d8d8d8;margin:1px 1px 3px 3px;padding:0}.hi{background:#ececec}</style>
<div>Nach oben</div><div class="off">Nach unten</div><div class="hr"></div><div class="hi">Neue Palette</div><div>Palette umbenennen</div>`);
def('x-annotation',`<style>:host{position:absolute;left:30px;top:265px;z-index:3;display:block}</style>
<svg xmlns="http://www.w3.org/2000/svg" width="60" height="60" viewBox="1278 388 60 60" style="display:block"><path fill="#1a9ad6" d="M1335 398L1330 423L1323 418L1291 447L1287 446L1309 418L1311 410L1318 401Z"/></svg>`);

/* ---- status ---- */
const st=[['st1',921],['st2',935],['tri',949],['st3',964],['st4',978],['st5',993],['tri',1005],['st6',1018],['tri',1029],['st7',1042],['st8',1056],['tri',1068],['st9',1080],['st10',1097],['st11',1113],['st12',1128],['st13',1143],['tri',1155],['st14',1169],['st15',1185],['st16',1199],['1:1',1213],['tri',1223],['st17',1237],['tri',1249],['st18',1261],['st19',1278],['st20',1296],['st21',1311],['st22',1330],['st23',1346],['st24',1364],['ham',1379]];
def('x-statusbar',`<style>:host{display:flex;align-items:center;height:18px;background:#3b4453;border-top:1px solid #262c37;box-sizing:border-box;border-bottom:1px solid #1c2532;color:#c6cbd3;padding-left:2px}
.bl{width:764px;height:15px;background:#3f4858;flex:none}
.co{width:108px;margin-left:2px;height:14px;background:#2f3744;text-align:right;padding-right:1px;box-sizing:border-box;line-height:14px;font-size:7.300px;white-space:nowrap}
.mo{width:32px;height:14px;margin-left:2px;background:#2f3744;text-align:center;line-height:14px}
.ic{display:flex;align-items:center;margin-left:4px}
.c{display:flex;justify-content:center;align-items:center;flex:none}
</style><div class="bl"></div><div class="co">6528.1682, -87.7263, 0.0000</div><div class="mo">MODELL</div><div class="ic" id="i"></div>`,(e,r)=>{
 r.getElementById('i').innerHTML=st.map(([n,c],i)=>{
  const p=i?st[i-1][1]:c-7,x=i<st.length-1?st[i+1][1]:c+7,w=(x-p)/2;
  const inner=n==='1:1'?'<span style="font-size:6.500px">1:1</span>':svg(n,n==='tri'?4:(n==='st21'||n==='st23')?13:11);
  return `<div class="c" style="width:${w}px">${inner}</div>`}).join('');
});
/* ---- taskbar ---- */
def('x-taskbar',`<style>:host{display:flex;align-items:center;height:29px;background:#15273a;color:#e3e7ec;box-sizing:border-box}
.win{margin-left:324px}
.s{width:133px;height:19px;border-radius:10px;background:#384654;margin-left:8px;display:flex;align-items:center;padding-left:9px;box-sizing:border-box;gap:4px;font:8.500px "Open Sans",sans-serif;color:#d5dae0}
.apps{display:flex;margin-left:2px}
.a{width:26.500px;height:29px;display:flex;align-items:center;justify-content:center;position:relative}
.a::after{content:"";position:absolute;bottom:2px;left:11.500px;width:3px;height:1.500px;background:#8d97a3}
.a.on{background:#2a3948;border-radius:3px}.a.on::after{background:#4ea8e6;width:8px;left:9px}
.r{margin-left:auto;display:flex;align-items:center}
.time{text-align:right;line-height:10px;font-size:7.500px;margin:0 4px 0 6px;width:42px}
</style><span class="win" id="w"></span><div class="s"><span id="m"></span>Suche</div><div class="apps" id="ap"></div><div class="r" id="r"></div>`,(e,r)=>{
 r.getElementById('w').innerHTML=tsvg('win',16);
 r.getElementById('m').innerHTML='<svg width="11" height="11" viewBox="0 0 12 12" style="display:block"><circle cx="5" cy="5" r="3.800" fill="none" stroke="#e3e7ec"/><path stroke="#e3e7ec" stroke-width="1.200" d="M8 8l3 3"/></svg>';
 r.getElementById('ap').innerHTML=['tv','gx','grn','chrome','folder','edge','m','teams','ol','one','xl','cam','arrowb','pdf','ol2','acad'].map((n,i)=>`<div class="a${i==15?' on':''}">${tsvg(n,15)}</div>`).join('');
 r.getElementById('r').innerHTML=[['chev',9,9],['cloud',11,7],['mic',11,9],['net',11,5],['vol',10,5],['bat',11,0]].map(([n,s,m])=>`<span style="margin-right:${m}px">${tsvg(n,s)}</span>`).join('')+`<div class="time">17:39<br>25.02.2025</div><span style="margin-right:11px">${tsvg('bell',11)}</span>`;
});

/* ---- page ---- */
document.body.insertAdjacentHTML('beforeend',`
<x-titlebar></x-titlebar><x-menubar></x-menubar><x-ribbontabs></x-ribbontabs>
<x-ribbon>
 <x-panel w="272" title="Teile"><span style="width:3px"></span>
  <x-big w="24" i="profil">Profil</x-big><x-big w="21" i="raster">Raster</x-big><x-big w="34" i="gelaender">Geländer</x-big><x-big w="27" i="treppen">Treppen</x-big><x-big w="25" i="platte">Platte</x-big><x-big w="38" i="fundament">Fundament</x-big><x-big w="24" i="leiter">Leiter</x-big>
  <x-smallgrid cols="1fr" w="72" pt="3px" rh="15px"><x-srow i="ibeam">Profilmodell&nbsp;<x-ic n="triw" s="5"></x-ic></x-srow><x-srow i="gear">Einstellungen&nbsp;&nbsp;&nbsp;&nbsp;<x-ic n="triw" s="5"></x-ic></x-srow></x-smallgrid>
 </x-panel>
 <x-panel w="72" title="Ändern"><span style="width:3px"></span><x-big w="36" i="bedit">Stahlbau<br>bearbeiten</x-big><x-big w="32" i="bdel">Stahlbau<br>auflösen</x-big></x-panel>
 <x-panel w="139" title="Schneiden"><span style="width:2px"></span><x-big w="38" i="plen">Profillänge<br>ändern</x-big>
  <x-smallgrid cols="16px 15px 13px" w="44" pt="4px" rh="14px"><x-ic n="s1"></x-ic><x-ic n="s2"></x-ic><span></span><x-ic n="s4"></x-ic><x-ic n="s4"></x-ic><x-ic n="s5"></x-ic></x-smallgrid>
  <x-big w="54" i="prest">Profil<br>wiederherstellen</x-big></x-panel>
 <x-panel w="66" title="Sichtbarkeit"><span style="width:2px"></span><x-big w="34" i="alle">Alle<br>anzeigen</x-big><x-smallgrid cols="14px 17px" w="30" pt="4px" rh="14.500px"><x-ic n="v1"></x-ic><x-ic n="v2"></x-ic><x-ic n="v3"></x-ic><x-ic n="v4"></x-ic><x-ic n="v5"></x-ic><x-ic n="v6"></x-ic></x-smallgrid></x-panel>
 <x-panel w="70" title="Export"><span style="width:2px"></span><x-big w="66" i="xml">Advance Steel XML-<br>Export</x-big></x-panel>
 <x-panel w="124" title="Ansicht" arrow><div style="display:flex;flex-direction:column;gap:3px;padding:4px 0 0 3px;width:119px"><x-combo i="concept">Konzeptuell</x-combo><x-combo i="unsaved">Ungesicherte Ansicht</x-combo><x-srow i="single" s="12">&nbsp;Einzelnes Ansichtsfenster&nbsp;<x-ic n="triw" s="5"></x-ic></x-srow></div></x-panel>
 <x-panel w="207" title="Layer" arrow style="border-right:0"><span style="width:3px"></span><x-big w="46" i="lay">Layer-<br>Eigenschaften</x-big>
  <div style="display:flex;flex-direction:column;padding:4px 0 0 2px"><x-combo i="bulb sun lock swatch" style="width:124px;gap:2px">&nbsp;0</x-combo>
  <x-srow i="la1 la2 la3 la4 la5" s="11" style="margin-top:1.500px;gap:3px;height:15px">&nbsp;Als aktuell festlegen</x-srow><x-srow i="lb1 lb2 lb3 lb4 lb5" s="11" style="gap:3px;height:15px">&nbsp;Layer anpassen</x-srow></div></x-panel>
</x-ribbon>
<x-filetabs></x-filetabs>
<div style="height:3px;background:#3b4453"></div>
<x-workspace><x-project></x-project><x-viewport></x-viewport><x-palette><x-contextmenu></x-contextmenu><x-annotation></x-annotation></x-palette></x-workspace>
<x-statusbar></x-statusbar><x-taskbar></x-taskbar>`);
</script>
</body></html>
